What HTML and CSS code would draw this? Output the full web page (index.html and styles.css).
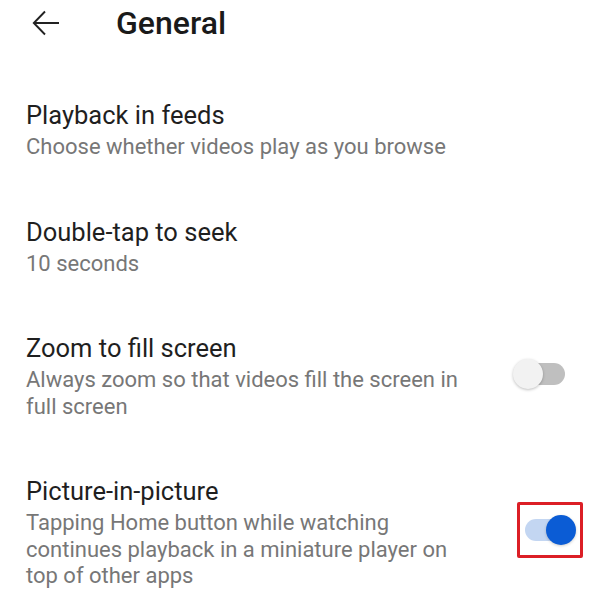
FILE: index.html
```html
<!DOCTYPE html>
<html>
<head>
<meta charset="utf-8">
<link rel="stylesheet" href="styles.css">
</head>
<body>
<div class="screen">
  <header class="topbar">
    <svg class="back" width="28" height="26" viewBox="0 0 28 26">
      <path d="M27 13H2M13 1.5L1.8 13L13 24.5" fill="none" stroke="#222" stroke-width="1.9"/>
    </svg>
    <h1 class="page-title">General</h1>
  </header>
  <ul class="settings">
    <li class="item">
      <div class="text">
        <div class="label">Playback in feeds</div>
        <div class="desc">Choose whether videos play as you browse</div>
      </div>
    </li>
    <li class="item">
      <div class="text">
        <div class="label">Double-tap to seek</div>
        <div class="desc">10 seconds</div>
      </div>
    </li>
    <li class="item">
      <div class="text narrow">
        <div class="label">Zoom to fill screen</div>
        <div class="desc">Always zoom so that videos fill the screen in full screen</div>
      </div>
      <div class="switch off"><span class="knob"></span></div>
    </li>
    <li class="item">
      <div class="text narrow">
        <div class="label">Picture-in-picture</div>
        <div class="desc">Tapping Home button while watching continues playback in a miniature player on top of other apps</div>
      </div>
      <div class="switch on highlighted"><span class="knob"></span></div>
    </li>
  </ul>
</div>
</body>
</html>
```
FILE: styles.css
```css
* { box-sizing: border-box; }
html, body { margin: 0; padding: 0; background: #fff; }
body { font-family: Roboto, "Noto Sans", sans-serif; color: #1f1f1f; }
.screen { width: 615px; height: 600px; overflow: hidden; }
.topbar {
  display: flex;
  align-items: center;
  height: 46px;
  padding-left: 32px;
  gap: 56px;
}
.back { display: block; flex: none; }
.page-title {
  margin: 0;
  font-size: 32px;
  font-weight: 500;
  color: #1a1a1a;
  line-height: 38px;
}
.settings {
  list-style: none;
  margin: 54px 0 0 0;
  padding: 0 50px 0 26px;
  display: flex;
  flex-direction: column;
  gap: 56px;
}
.item {
  display: flex;
  align-items: center;
  justify-content: space-between;
}
.text { flex: 1; }
.text.narrow { max-width: 458px; }
.label {
  font-size: 25.5px;
  line-height: 30px;
  color: #1f1f1f;
}
.desc {
  margin-top: 4px;
  font-size: 22px;
  line-height: 26.5px;
  color: #777;
}
.switch {
  position: relative;
  flex: none;
  width: 40px;
  height: 22px;
  border-radius: 11px;
  margin-bottom: 5px;
}
.switch .knob {
  position: absolute;
  top: -4px;
  width: 30px;
  height: 30px;
  border-radius: 50%;
}
.switch.off { background: #bfbfbf; }
.switch.off .knob {
  left: -12px;
  background: #f2f2f2;
  box-shadow: 0 1px 3px rgba(0,0,0,0.25);
}
.switch.on { background: #c3d6f2; }
.switch.on .knob {
  left: 21px;
  background: #0b5cd5;
  box-shadow: 0 1px 3px rgba(0,0,0,0.2);
}
.switch.highlighted::after {
  content: "";
  position: absolute;
  left: -8px;
  right: -18px;
  top: -17px;
  bottom: -17px;
  border: 3px solid #dc1f26;
  border-radius: 2px;
}
```
